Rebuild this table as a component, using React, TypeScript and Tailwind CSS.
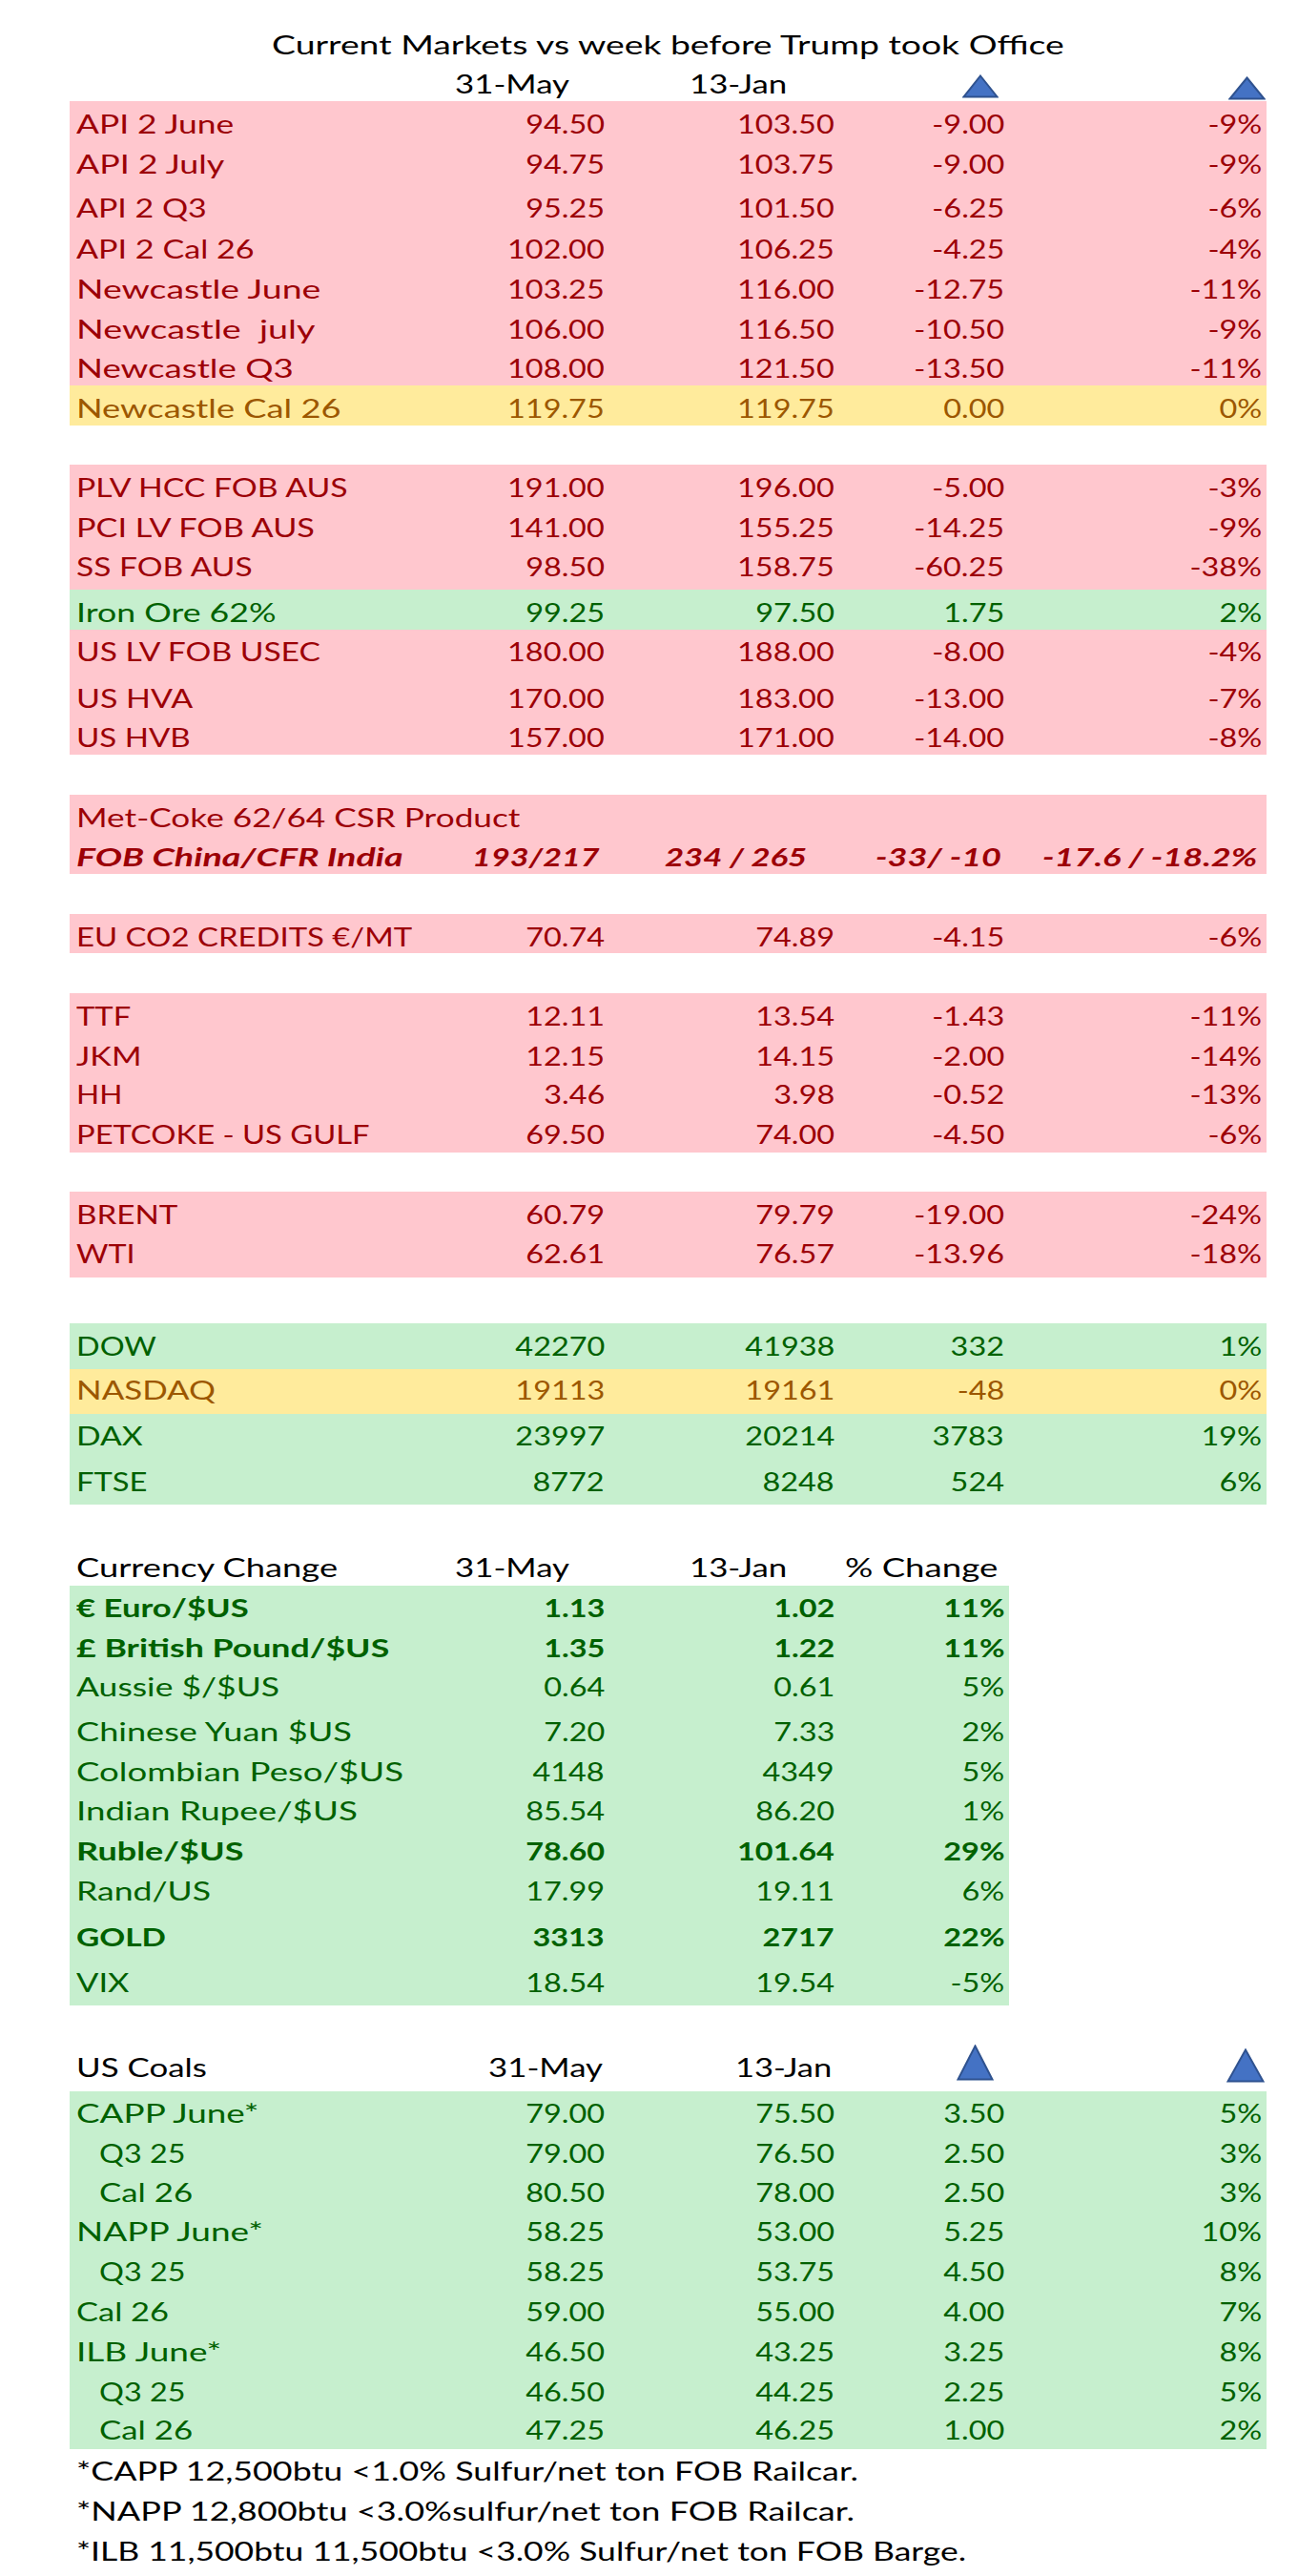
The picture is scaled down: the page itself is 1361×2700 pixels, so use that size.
import { useLayoutEffect, useRef, useState } from 'react';
import type { ReactNode } from 'react';

type Tone = 'red' | 'green' | 'yellow';

const tones: Record<Tone, string> = {
  red: 'bg-[#ffc7ce] text-[#9c0006]',
  green: 'bg-[#c6efce] text-[#006100]',
  yellow: 'bg-[#ffeb9c] text-[#9c5700]',
};

type Row = {
  label: string;
  w: number; // width of the label in the sheet
  v: string[];
  tone: Tone;
  cls: string; // height + bottom padding, written out in full
  bold?: boolean;
  indent?: boolean;
};

const origins = { left: 'origin-left', right: 'origin-right', center: 'origin-center' };

// the sheet's text is stretched sideways; squeeze/stretch each piece to the width it has there
function Fit({ w, at = 'left', children }: { w: number; at?: keyof typeof origins; children: ReactNode }) {
  const ref = useRef<HTMLSpanElement>(null);
  const [s, setS] = useState(1.3);

  useLayoutEffect(() => {
    const measure = () => {
      const el = ref.current;
      if (el && el.offsetWidth) setS((w + 2) / el.offsetWidth);
    };
    measure();
    document.fonts?.ready.then(measure);
  }, [w]);

  return (
    <span ref={ref} className={`inline-block whitespace-pre ${origins[at]}`} style={{ transform: `scaleX(${s})` }}>
      {children}
    </span>
  );
}

function N({ children }: { children: ReactNode }) {
  return <span className="inline-block origin-right scale-x-[1.2] whitespace-pre">{children}</span>;
}

function Tri({ w, h }: { w: number; h: number }) {
  return (
    <svg width={w} height={h} viewBox={`0 0 ${w} ${h}`} className="block">
      <polygon
        points={`${w / 2},1.5 ${w - 1.5},${h - 1.5} 1.5,${h - 1.5}`}
        fill="#4472c4"
        stroke="#2f528f"
        strokeWidth="2"
      />
    </svg>
  );
}

const wide = 'grid grid-cols-[400px_161px_241px_178px_270px]';
const narrow = 'grid grid-cols-[400px_161px_241px_178px]';

function Band({ rows, grid = wide }: { rows: Row[]; grid?: string }) {
  return (
    <div>
      {rows.map((r, i) => (
        <div key={i} className={`${grid} items-end ${tones[r.tone]} ${r.cls} ${r.bold ? 'font-bold' : ''}`}>
          <div className={r.indent ? 'pl-[31px]' : 'pl-[7px]'}>
            <Fit w={r.w}>{r.label}</Fit>
          </div>
          {r.v.map((x, j) => (
            <div key={j} className="text-right">
              <N>{x}</N>
            </div>
          ))}
        </div>
      ))}
    </div>
  );
}

const api: Row[] = [
  { label: 'API 2 June', w: 163, v: ['94.50', '103.50', '-9.00', '-9%'], tone: 'red', cls: 'h-[42px] pb-[5px]' },
  { label: 'API 2 July', w: 153, v: ['94.75', '103.75', '-9.00', '-9%'], tone: 'red', cls: 'h-[42px] pb-[5px]' },
  { label: 'API 2 Q3', w: 135, v: ['95.25', '101.50', '-6.25', '-6%'], tone: 'red', cls: 'h-[46px] pb-[5px]' },
  { label: 'API 2 Cal 26', w: 185, v: ['102.00', '106.25', '-4.25', '-4%'], tone: 'red', cls: 'h-[43px] pb-[5px]' },
  { label: 'Newcastle June', w: 254, v: ['103.25', '116.00', '-12.75', '-11%'], tone: 'red', cls: 'h-[42px] pb-[5px]' },
  { label: 'Newcastle  july', w: 248, v: ['106.00', '116.50', '-10.50', '-9%'], tone: 'red', cls: 'h-[42px] pb-[5px]' },
  { label: 'Newcastle Q3', w: 226, v: ['108.00', '121.50', '-13.50', '-11%'], tone: 'red', cls: 'h-[41px] pb-[5px]' },
  { label: 'Newcastle Cal 26', w: 276, v: ['119.75', '119.75', '0.00', '0%'], tone: 'yellow', cls: 'h-[42px] pb-[5px]' },
];

const met: Row[] = [
  { label: 'PLV HCC FOB AUS', w: 283, v: ['191.00', '196.00', '-5.00', '-3%'], tone: 'red', cls: 'h-[42px] pb-[5px]' },
  { label: 'PCI LV FOB AUS', w: 248, v: ['141.00', '155.25', '-14.25', '-9%'], tone: 'red', cls: 'h-[42px] pb-[5px]' },
  { label: 'SS FOB AUS', w: 183, v: ['98.50', '158.75', '-60.25', '-38%'], tone: 'red', cls: 'h-[47px] pb-[11px]' },
  { label: 'Iron Ore 62%', w: 208, v: ['99.25', '97.50', '1.75', '2%'], tone: 'green', cls: 'h-[42px] pb-[5px]' },
  { label: 'US LV FOB USEC', w: 254, v: ['180.00', '188.00', '-8.00', '-4%'], tone: 'red', cls: 'h-[41px] pb-[5px]' },
  { label: 'US HVA', w: 120, v: ['170.00', '183.00', '-13.00', '-7%'], tone: 'red', cls: 'h-[49px] pb-[5px]' },
  { label: 'US HVB', w: 118, v: ['157.00', '171.00', '-14.00', '-8%'], tone: 'red', cls: 'h-[41px] pb-[5px]' },
];

const gas: Row[] = [
  { label: 'TTF', w: 55, v: ['12.11', '13.54', '-1.43', '-11%'], tone: 'red', cls: 'h-[42px] pb-[5px]' },
  { label: 'JKM', w: 66, v: ['12.15', '14.15', '-2.00', '-14%'], tone: 'red', cls: 'h-[42px] pb-[5px]' },
  { label: 'HH', w: 46, v: ['3.46', '3.98', '-0.52', '-13%'], tone: 'red', cls: 'h-[40px] pb-[5px]' },
  { label: 'PETCOKE - US GULF', w: 306, v: ['69.50', '74.00', '-4.50', '-6%'], tone: 'red', cls: 'h-[43px] pb-[6px]' },
];

const oil: Row[] = [
  { label: 'BRENT', w: 105, v: ['60.79', '79.79', '-19.00', '-24%'], tone: 'red', cls: 'h-[42px] pb-[5px]' },
  { label: 'WTI', w: 59, v: ['62.61', '76.57', '-13.96', '-18%'], tone: 'red', cls: 'h-[48px] pb-[12px]' },
];

const stocks: Row[] = [
  { label: 'DOW', w: 82, v: ['42270', '41938', '332', '1%'], tone: 'green', cls: 'h-[48px] pb-[11px]' },
  { label: 'NASDAQ', w: 144, v: ['19113', '19161', '-48', '0%'], tone: 'yellow', cls: 'h-[47px] pb-[12px]' },
  { label: 'DAX', w: 68, v: ['23997', '20214', '3783', '19%'], tone: 'green', cls: 'h-[47px] pb-[11px]' },
  { label: 'FTSE', w: 72, v: ['8772', '8248', '524', '6%'], tone: 'green', cls: 'h-[48px] pb-[11px]' },
];

const fx: Row[] = [
  { label: '€ Euro/$US', w: 179, v: ['1.13', '1.02', '11%'], tone: 'green', cls: 'h-[42px] pb-[6px]', bold: true },
  { label: '£ British Pound/$US', w: 326, v: ['1.35', '1.22', '11%'], tone: 'green', cls: 'h-[42px] pb-[6px]', bold: true },
  { label: 'Aussie $/$US', w: 211, v: ['0.64', '0.61', '5%'], tone: 'green', cls: 'h-[41px] pb-[6px]' },
  { label: 'Chinese Yuan $US', w: 287, v: ['7.20', '7.33', '2%'], tone: 'green', cls: 'h-[47px] pb-[6px]' },
  { label: 'Colombian Peso/$US', w: 341, v: ['4148', '4349', '5%'], tone: 'green', cls: 'h-[42px] pb-[6px]' },
  { label: 'Indian Rupee/$US', w: 293, v: ['85.54', '86.20', '1%'], tone: 'green', cls: 'h-[41px] pb-[6px]' },
  { label: 'Ruble/$US', w: 174, v: ['78.60', '101.64', '29%'], tone: 'green', cls: 'h-[42px] pb-[6px]', bold: true },
  { label: 'Rand/US', w: 139, v: ['17.99', '19.11', '6%'], tone: 'green', cls: 'h-[42px] pb-[6px]' },
  { label: 'GOLD', w: 92, v: ['3313', '2717', '22%'], tone: 'green', cls: 'h-[48px] pb-[6px]', bold: true },
  { label: 'VIX', w: 53, v: ['18.54', '19.54', '-5%'], tone: 'green', cls: 'h-[53px] pb-[11px]' },
];

const coals: Row[] = [
  { label: 'CAPP June*', w: 189, v: ['79.00', '75.50', '3.50', '5%'], tone: 'green', cls: 'h-[42px] pb-[6px]' },
  { label: 'Q3 25', w: 89, v: ['79.00', '76.50', '2.50', '3%'], tone: 'green', cls: 'h-[42px] pb-[6px]', indent: true },
  { label: 'Cal 26', w: 96, v: ['80.50', '78.00', '2.50', '3%'], tone: 'green', cls: 'h-[41px] pb-[6px]', indent: true },
  { label: 'NAPP June*', w: 194, v: ['58.25', '53.00', '5.25', '10%'], tone: 'green', cls: 'h-[41px] pb-[6px]' },
  { label: 'Q3 25', w: 89, v: ['58.25', '53.75', '4.50', '8%'], tone: 'green', cls: 'h-[42px] pb-[6px]', indent: true },
  { label: 'Cal 26', w: 95, v: ['59.00', '55.00', '4.00', '7%'], tone: 'green', cls: 'h-[42px] pb-[6px]' },
  { label: 'ILB June*', w: 150, v: ['46.50', '43.25', '3.25', '8%'], tone: 'green', cls: 'h-[42px] pb-[6px]' },
  { label: 'Q3 25', w: 89, v: ['46.50', '44.25', '2.25', '5%'], tone: 'green', cls: 'h-[42px] pb-[6px]', indent: true },
  { label: 'Cal 26', w: 96, v: ['47.25', '46.25', '1.00', '2%'], tone: 'green', cls: 'h-[41px] pb-[7px]', indent: true },
];

const notes: [string, number][] = [
  ['*CAPP 12,500btu <1.0% Sulfur/net ton FOB Railcar.', 818],
  ['*NAPP 12,800btu <3.0%sulfur/net ton FOB Railcar.', 814],
  ['*ILB 11,500btu 11,500btu <3.0% Sulfur/net ton FOB Barge.', 931],
];

export default function App() {
  return (
    <div className="min-h-[2700px] bg-white font-[Lato,sans-serif] text-[27px] leading-none text-black">
      <div className="ml-[73px] w-[1255px]">
        {/* Title */}
        <div className="flex h-[70px] items-end justify-center pb-[10px]">
          <Fit w={829} at="center">Current Markets vs week before Trump took Office</Fit>
        </div>

        {/* Column heads */}
        <div className={`${wide} h-[36px] items-end`}>
          <div />
          <div className="pr-[37px] pb-[5px] text-right"><Fit w={118} at="right">31-May</Fit></div>
          <div className="pr-[50px] pb-[5px] text-right"><Fit w={100} at="right">13-Jan</Fit></div>
          <div className="flex justify-end pr-[6px] pb-[3px]"><Tri w={38} h={25} /></div>
          <div className="-mr-[4px] flex justify-end pb-[1px]"><Tri w={39} h={25} /></div>
        </div>

        <Band rows={api} />
        <div className="h-[41px]" />
        <Band rows={met} />
        <div className="h-[42px]" />

        {/* Met coke */}
        <div className={tones.red}>
          <div className="flex h-[42px] items-end pb-[5px] pl-[7px]">
            <Fit w={463}>Met-Coke 62/64 CSR Product</Fit>
          </div>
          <div className={`${wide} h-[41px] items-end pb-[5px] font-bold italic`}>
            <div className="pl-[7px]"><Fit w={341}>FOB China/CFR India</Fit></div>
            <div className="pr-[5px] text-right"><Fit w={132} at="right">193/217</Fit></div>
            <div className="pr-[29px] text-right"><Fit w={147} at="right">234 / 265</Fit></div>
            <div className="pr-[3px] text-right"><Fit w={130} at="right">-33/ -10</Fit></div>
            <div className="pr-[5px] text-right"><Fit w={223} at="right">-17.6 / -18.2%</Fit></div>
          </div>
        </div>
        <div className="h-[42px]" />

        <Band rows={[{ label: 'EU CO2 CREDITS €/MT', w: 350, v: ['70.74', '74.89', '-4.15', '-6%'], tone: 'red', cls: 'h-[41px] pb-[4px]' }]} />
        <div className="h-[42px]" />
        <Band rows={gas} />
        <div className="h-[41px]" />
        <Band rows={oil} />
        <div className="h-[48px]" />
        <Band rows={stocks} />
        <div className="h-[43px]" />

        {/* Currencies */}
        <div className="w-[985px]">
          <div className={`${narrow} h-[42px] items-end pb-[6px]`}>
            <div className="pl-[7px]"><Fit w={272}>Currency Change</Fit></div>
            <div className="pr-[37px] text-right"><Fit w={118} at="right">31-May</Fit></div>
            <div className="pr-[50px] text-right"><Fit w={100} at="right">13-Jan</Fit></div>
            <div className="pr-[7px] text-right"><Fit w={158} at="right">% Change</Fit></div>
          </div>
          <Band rows={fx} grid={narrow} />
        </div>
        <div className="h-[38px]" />

        {/* US coals */}
        <div className={`${wide} h-[52px] items-end`}>
          <div className="pb-[12px] pl-[7px]"><Fit w={135}>US Coals</Fit></div>
          <div className="pr-[2px] pb-[12px] text-right"><Fit w={118} at="right">31-May</Fit></div>
          <div className="pr-[3px] pb-[12px] text-right"><Fit w={99} at="right">13-Jan</Fit></div>
          <div className="flex justify-end pr-[11px] pb-[11px]"><Tri w={39} h={38} /></div>
          <div className="-mr-[3px] flex justify-end pb-[9px]"><Tri w={40} h={36} /></div>
        </div>
        <Band rows={coals} />

        <div>
          {notes.map(([n, w]) => (
            <div key={n} className="flex h-[42px] items-end pb-[6px] pl-[7px]">
              <Fit w={w}>{n}</Fit>
            </div>
          ))}
        </div>
      </div>
    </div>
  );
}
